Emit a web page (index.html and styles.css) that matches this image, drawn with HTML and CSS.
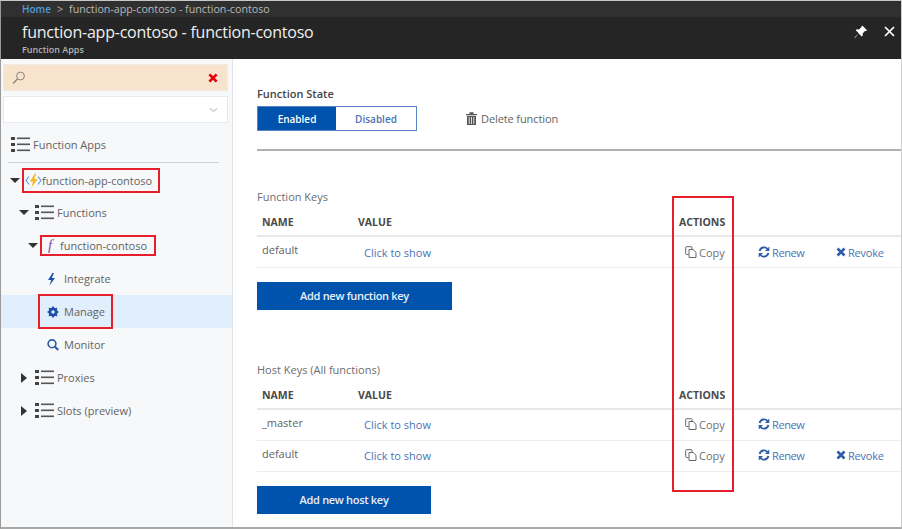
FILE: index.html
```html
<!DOCTYPE html>
<html lang="en">
<head>
    <meta charset="UTF-8">
    <title>function-app-contoso - function-contoso</title>
    <link rel="stylesheet" href="styles.css">
</head>
<body>
    <svg class="defs" width="0" height="0">
        <symbol id="i-list" viewBox="0 0 19 17">
            <rect x="0" y="1" width="4" height="3" fill="#444"/><rect x="0" y="7" width="4" height="3" fill="#444"/><rect x="0" y="13" width="4" height="3" fill="#444"/>
            <rect x="6" y="1.5" width="13" height="1.6" fill="#555"/><rect x="6" y="7.5" width="13" height="1.6" fill="#555"/><rect x="6" y="13.5" width="13" height="1.6" fill="#555"/>
        </symbol>
        <symbol id="i-copy" viewBox="0 0 12 12">
            <path d="M3.5 8.5H1.500a.8.8 0 0 1-.8-.8V1.500a.8.8 0 0 1 .8-.8h4.700a.8.8 0 0 1 .8.8v1.500" fill="none" stroke="#666" stroke-width="1"/>
            <path d="M4 3.500h4.200l2.800 2.800v5.200H4z" fill="#fff" stroke="#666" stroke-width="1"/>
        </symbol>
        <symbol id="i-renew" viewBox="0 0 12 12">
            <path d="M1.600 5A4.600 4.600 0 0 1 9.600 3M10.400 7A4.600 4.600 0 0 1 2.400 9" fill="none" stroke="#2f5ea8" stroke-width="1.900"/>
            <path d="M11.300 .6v4.300H7zM.7 11.400V7.100H5z" fill="#2f5ea8"/>
        </symbol>
        <symbol id="i-revoke" viewBox="0 0 10 10">
            <path d="M1.500 1.500l7 7M8.500 1.500l-7 7" stroke="#2f5ea8" stroke-width="2.600" fill="none"/>
        </symbol>
    </svg>

    <header class="blade-head">
        <div class="crumbs"><a class="home">Home</a><span class="sep">&gt;</span><span>function-app-contoso - function-contoso</span></div>
        <div class="title-bar">
            <div>
                <h1>function-app-contoso - function-contoso</h1>
                <div class="subtitle">Function Apps</div>
            </div>
            <div class="head-icons">
                <svg width="14" height="14" viewBox="0 0 14 14"><path d="M8.600 .8l4.600 4.600-1.200.6-.8-.3-2.600 2.700.2 2.200-1 1L4.700 8.500 1 13 .6 12.600 4.800 8.300 1.700 5.300l1-1 2.200.2 2.700-2.600-.2-.9z" fill="#fff"/></svg>
                <svg width="11" height="11" viewBox="0 0 11 11"><path d="M1 1l9 9M10 1l-9 9" stroke="#fff" stroke-width="1.700" fill="none"/></svg>
            </div>
        </div>
    </header>

    <div class="blade-body">
        <aside class="sidebar">
            <div class="search">
                <svg width="14" height="14" viewBox="0 0 14 14"><circle cx="8.500" cy="5" r="3.900" fill="none" stroke="#8a8478" stroke-width="1"/><path d="M5.700 7.800L1 12.600" stroke="#8a8478" stroke-width="1.400"/></svg>
                <svg width="10" height="10" viewBox="0 0 11 11"><path d="M1.500 1.500l8 8M9.500 1.500l-8 8" stroke="#e8000f" stroke-width="3" fill="none"/></svg>
            </div>
            <div class="picker">
                <svg width="9" height="6" viewBox="0 0 11 6"><path d="M1 .8l4.500 4 4.500-4" stroke="#c5ccd3" stroke-width="1.400" fill="none"/></svg>
            </div>

            <div class="tree-root"><svg class="list-ic" width="19" height="17"><use href="#i-list"/></svg>Function Apps</div>

            <ul class="tree">
                <li class="lvl0">
                    <i class="caret down"></i>
                    <span class="mark app">
                        <svg width="17" height="15" viewBox="0 0 17 15"><path d="M4 3.500L1 7.500 4 11.500M13 3.500l3 4-3 4" stroke="#5f9bd8" stroke-width="1.100" fill="none"/><path d="M10 .5L4.800 8.500h3.200L6.500 14.500 12.800 6H9.300l1.900-5.500z" fill="#f5b82e"/></svg>
                        function-app-contoso
                    </span>
                </li>
                <li class="lvl1"><i class="caret down"></i><svg class="list-ic" width="19" height="17"><use href="#i-list"/></svg>Functions</li>
                <li class="lvl2">
                    <i class="caret down"></i>
                    <span class="mark fn"><em class="fn-ic">f</em>function-contoso</span>
                </li>
                <li class="lvl3">
                    <svg class="leaf-ic" width="14" height="14" viewBox="0 0 14 14"><path d="M5.500 1L1 8h3.200L2.500 13.500 8 6H4.800L7 1z" fill="#1d50a8"/></svg>Integrate
                </li>
                <li class="lvl3 current">
                    <span class="mark manage">
                        <svg class="leaf-ic" width="14" height="14" viewBox="0 0 14 14"><circle cx="6" cy="7" r="3.200" fill="none" stroke="#1d50a8" stroke-width="2.800"/><path d="M6 1.500v11M.5 7h11M2.100 3.100l7.800 7.800M9.900 3.100l-7.800 7.800" stroke="#1d50a8" stroke-width="1.700"/><circle cx="6" cy="7" r="1.700" fill="#e1eefb"/></svg>Manage
                    </span>
                </li>
                <li class="lvl3">
                    <svg class="leaf-ic" width="14" height="14" viewBox="0 0 14 14"><circle cx="5" cy="5.800" r="3.900" fill="none" stroke="#2a5cab" stroke-width="1.600"/><path d="M7.800 8.600l3.400 3.400" stroke="#2a5cab" stroke-width="2.100"/></svg>Monitor
                </li>
                <li class="lvl1"><i class="caret right"></i><svg class="list-ic" width="19" height="17"><use href="#i-list"/></svg>Proxies</li>
                <li class="lvl1"><i class="caret right"></i><svg class="list-ic" width="19" height="17"><use href="#i-list"/></svg>Slots (preview)</li>
            </ul>
        </aside>

        <main class="content">
            <div class="state">
                <h2>Function State</h2>
                <div class="state-row">
                    <div class="toggle"><span class="on">Enabled</span><span>Disabled</span></div>
                    <a class="delete">
                        <svg width="11" height="13" viewBox="0 0 11 13"><path d="M0 2h11v1.200H0zM3.500 .3h4V2h-4z" fill="#555"/><path d="M1 4h9v9H1z" fill="#555"/><path d="M3.200 5v7M5.500 5v7M7.800 5v7" stroke="#fff" stroke-width=".8"/></svg>
                        Delete function
                    </a>
                </div>
            </div>

            <section class="keys fn-keys">
                <h3>Function Keys</h3>
                <div class="row head"><span>NAME</span><span>VALUE</span><span>ACTIONS</span></div>
                <div class="row">
                    <span class="name">default</span><a class="val">Click to show</a>
                    <a class="act copy"><svg width="12" height="12"><use href="#i-copy"/></svg>Copy</a>
                    <a class="act renew"><svg width="12" height="12"><use href="#i-renew"/></svg>Renew</a>
                    <a class="act"><svg width="10" height="10"><use href="#i-revoke"/></svg>Revoke</a>
                </div>
                <button class="add wide">Add new function key</button>
            </section>

            <section class="keys host-keys">
                <h3>Host Keys (All functions)</h3>
                <div class="row head"><span>NAME</span><span>VALUE</span><span>ACTIONS</span></div>
                <div class="row">
                    <span class="name">_master</span><a class="val">Click to show</a>
                    <a class="act copy"><svg width="12" height="12"><use href="#i-copy"/></svg>Copy</a>
                    <a class="act renew"><svg width="12" height="12"><use href="#i-renew"/></svg>Renew</a>
                </div>
                <div class="row">
                    <span class="name">default</span><a class="val">Click to show</a>
                    <a class="act copy"><svg width="12" height="12"><use href="#i-copy"/></svg>Copy</a>
                    <a class="act renew"><svg width="12" height="12"><use href="#i-renew"/></svg>Renew</a>
                    <a class="act"><svg width="10" height="10"><use href="#i-revoke"/></svg>Revoke</a>
                </div>
                <button class="add">Add new host key</button>
            </section>

            <div class="actions-mark"></div>
        </main>
    </div>
</body>
</html>
```

FILE: styles.css
```css
* {
    box-sizing: border-box;
}
body {
    margin: 0;
    height: 529px;
    overflow: hidden;
    display: flex;
    flex-direction: column;
    background-color: #fff;
    font-family: "Open Sans", "Noto Sans", sans-serif;
    font-size: 11px;
    color: #636363;
    border-left: 1px solid #9a9a9a;
    border-top: 1px solid #c8c8c8;
    border-bottom: 2px solid #a8a8a8;
    border-right: 1px solid #d0d0d0;
}
.defs {
    position: absolute;
}

/* header */
.blade-head {
    height: 58px;
    flex: none;
    background-color: #252525;
    color: #fff;
}
.crumbs {
    height: 16px;
    padding-left: 21px;
    display: flex;
    align-items: center;
    background-color: #303030;
    color: #b8b8b8;
    font-size: 10.7px;
}
.home {
    color: #4f9ddb;
    font-size: 10px;
    font-weight: 600;
}
.sep {
    margin: 0 6px;
}
.title-bar {
    display: flex;
    justify-content: space-between;
    padding: 4px 6px 0 21px;
}
h1 {
    margin: 0;
    font-size: 16px;
    font-weight: 400;
    letter-spacing: -0.23px;
    line-height: 23px;
    color: #f0f0f0;
}
.subtitle {
    font-size: 9px;
    font-weight: 600;
    line-height: 11px;
    color: #b4b4b4;
}
.head-icons {
    display: flex;
    align-items: center;
    gap: 16px;
    height: 21px;
}

.blade-body {
    flex: 1;
    display: flex;
    min-height: 0;
}

/* sidebar */
.sidebar {
    width: 232px;
    flex: none;
    padding-top: 5px;
    background-color: #f6f8fa;
    border-right: 1px solid #e2e4e6;
}
.search {
    height: 27px;
    margin: 0 4px 0 2px;
    padding: 0 9px 0 8px;
    display: flex;
    align-items: center;
    justify-content: space-between;
    background-color: #f8e4cd;
    border: 1px solid #f0ece4;
}
.picker {
    height: 27px;
    margin: 5px 4px 0 2px;
    padding-right: 9px;
    display: flex;
    align-items: center;
    justify-content: flex-end;
    background-color: #fff;
    border: 1px solid #e6e9ed;
}
.tree-root {
    height: 40px;
    margin: 0 13px 0 7px;
    padding: 3px 0 0 3px;
    display: flex;
    align-items: center;
    gap: 3px;
    border-bottom: 1px solid #c6d3da;
}
.list-ic {
    flex: none;
}
.tree {
    list-style: none;
    margin: 0;
    padding: 0;
}
.tree li {
    height: 33px;
    display: flex;
    align-items: center;
}
.tree .lvl0 { padding: 2px 0 0 9px; }
.lvl1 { padding-left: 18px; }
.lvl2 { padding-left: 27px; }
.lvl3 { padding-left: 46px; }
.tree .current {
    background-color: #e1eefb;
}
.caret {
    flex: none;
    width: 0;
    height: 0;
    border-style: solid;
    border-color: transparent;
    margin-right: 5px;
}
.caret.down {
    border-width: 5px 5px 0;
    border-top-color: #333;
}
.lvl1 .caret.down {
    margin-right: 6px;
}
.caret.right {
    border-width: 5px 0 5px 6px;
    border-left-color: #333;
    margin: 0 8px 0 2px;
}
.lvl1 .list-ic {
    margin-right: 3px;
}
.leaf-ic {
    margin-right: 3px;
    flex: none;
}
.mark {
    display: inline-flex;
    align-items: center;
    border: 2px solid #e5202c;
}
.app {
    height: 25px;
    width: 138px;
    margin-left: -3px;
    padding-left: 1px;
}
.fn {
    height: 21px;
    width: 116px;
    padding-left: 6px;
    margin-left: -3px;
}
.fn-ic {
    width: 10px;
    margin-right: 2px;
    font-family: "Liberation Serif", serif;
    font-size: 15px;
    color: #7a4f9e;
}
.manage {
    height: 35px;
    width: 75px;
    margin-left: -9px;
    padding-left: 7px;
}

/* main */
.content {
    flex: 1;
    position: relative;
    padding-left: 24px;
    min-width: 0;
}
.state {
    height: 92px;
    border-bottom: 2px solid #b0b0b0;
    padding-top: 27px;
}
h2 {
    margin: 0 0 5px;
    font-size: 11px;
    font-weight: 600;
    line-height: 15px;
    color: #444;
}
.state-row {
    display: flex;
    align-items: center;
}
.toggle {
    display: flex;
    width: 160px;
    height: 25px;
    border: 1px solid #5b84c4;
    color: #4a73b5;
}
.toggle span {
    flex: 1;
    display: flex;
    align-items: center;
    justify-content: center;
    font-size: 10px;
    font-weight: 600;
}
.toggle .on {
    flex: none;
    width: 78px;
    background-color: #0053ad;
    color: #fff;
}
.delete {
    margin-left: 49px;
    display: flex;
    align-items: center;
    gap: 4px;
    letter-spacing: -0.1px;
}
.fn-keys {
    margin-top: 38px;
}
.host-keys {
    margin-top: 52px;
}
h3 {
    margin: 0;
    font-size: 11px;
    font-weight: 400;
    line-height: 15px;
    color: #6e6e6e;
}
.row {
    display: grid;
    grid-template-columns: 96px 321px 79px 78px auto;
    padding-left: 5px;
    height: 31px;
    align-items: center;
    border-bottom: 1px solid #eee;
}
.host-keys .row {
    padding-bottom: 2px;
}
.row.head,
.host-keys .row.head {
    height: 33px;
    padding: 5px 0 0 5px;
    border-bottom: 2px solid #e8e8e8;
    font-weight: 700;
    font-size: 10.5px;
    color: #4a4a4a;
}
.name {
    position: relative;
    top: -3px;
}
.host-keys .name {
    top: -2px;
}
.val {
    padding-left: 6px;
    color: #4a73b5;
}
.act {
    display: flex;
    align-items: center;
    gap: 2px;
    letter-spacing: -0.2px;
    color: #4a73b5;
}
.act.renew {
    letter-spacing: -0.4px;
}
.act.copy {
    padding-left: 6px;
    letter-spacing: 0;
    color: #707070;
}
.add {
    display: block;
    width: 174px;
    height: 28px;
    margin-top: 14px;
    padding: 0 0 2px;
    border: 0;
    background-color: #0053ad;
    color: #e8eef6;
    font: 600 11px "Open Sans", sans-serif;
    letter-spacing: -0.3px;
}
.add.wide {
    width: 195px;
}

/* red highlight over the actions column */
.actions-mark {
    position: absolute;
    left: 439px;
    top: 137px;
    width: 62px;
    height: 296px;
    border: 2px solid #e5202c;
}
```
